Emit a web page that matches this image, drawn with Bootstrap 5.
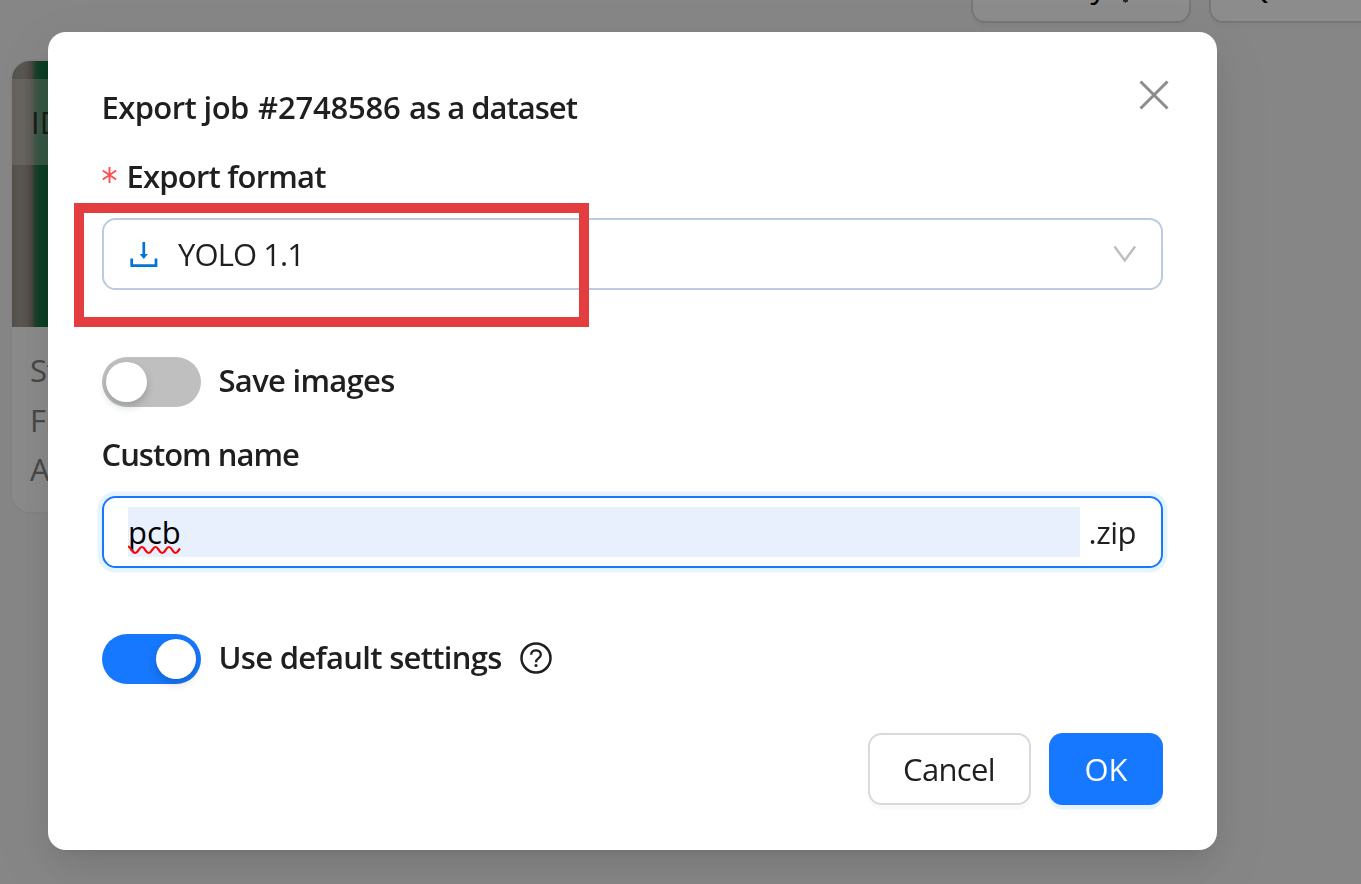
<!DOCTYPE html>
<html lang="en">
<head>
<meta charset="utf-8">
<meta name="viewport" content="width=device-width, initial-scale=1">
<title>Export job as a dataset</title>
<link rel="stylesheet" href="https://cdn.jsdelivr.net/npm/bootstrap@5.3.0/dist/css/bootstrap.min.css">
<style>
  body { font-family: "Open Sans", "Noto Sans", sans-serif; font-size: 31px; line-height: 42px; color: #1f1f1f; background: #f5f5f5; height: 884px; }
  .page { height: 884px; }
  .toolbar { height: 23px; padding-left: 971px; gap: 18px; }
  .tool { height: 72px; width: 220px; flex: none; border: 2px solid #d9d9d9; border-radius: 14px; background: #fff; box-shadow: 0 4px 0 rgba(0,0,0,.02); padding: 12px 0 0 31px; color: #000; white-space: nowrap; }
  .job-card { width: 500px; height: 451px; margin: 38px 0 0 12px; border-radius: 18px; background: #fdfdfd; border: 0; overflow: hidden; box-shadow: 0 0 0 2px rgba(0,0,0,.025); line-height: 49.5px; color: #838383; }
  .preview { height: 266px; flex: none; padding-top: 18px; background: linear-gradient(90deg, #9c8f86 0, #a09e94 6px, #9f9c90 12px, #9b8a80 17px, #7d8274 20px, #3d7650 23px, #1c7442 27px, #10703a 36px); }
  .job-id { height: 86px; background: rgba(225,225,220,.38); padding: 19px; color: #303030; }
  .job-info { padding: 19px 18px; letter-spacing: -.6px; }
  .mask { background: rgba(0,0,0,.45); }
  .export-dialog { width: 1169px; max-width: none; height: 818px; margin: 32px 0 0 48px; }
  .export-dialog .modal-content { height: 818px; border: 0; border-radius: 18px; padding: 54px 54px 45px; color: #1f1f1f;
    box-shadow: 0 13.5px 36px rgba(0,0,0,.08), 0 7px 13.5px -9px rgba(0,0,0,.12), 0 20px 63px 18px rgba(0,0,0,.05); }
  .heading { font-size: 31px; line-height: 42px; font-weight: 600; margin: 0; white-space: nowrap; }
  .t-title { letter-spacing: -.6px; margin: 0 0 27px -.5px; }
  .t-number { letter-spacing: -.2px; margin-left: 2px; }
  .t-rest { letter-spacing: -1px; margin-left: 1px; }
  .t-format { letter-spacing: -.8px; }
  .t-yolo { letter-spacing: -.9px; margin-left: 19px; }
  .t-save { letter-spacing: -.7px; margin-top: -4px; margin-left: -.5px; }
  .t-custom { letter-spacing: -1px; margin-left: -.5px; }
  .t-default { letter-spacing: -.7px; margin-top: -4px; margin-left: -.5px; }
  .t-cancel { letter-spacing: -.65px; margin-right: 1px; }
  .t-zip { letter-spacing: -.5px; margin-left: 9px; }
  .close-x { position: absolute; right: 48px; top: 48px; width: 30px; height: 30px; }
  .required { width: 24.5px; }
  .field { height: 72px; border-radius: 13.5px; border: 2px solid #bccbe0; margin-top: 21px; position: relative; padding: 0 24px 0 25px; }
  .field-active { border-color: #1677ff; box-shadow: 0 0 0 4.5px #e6f4ff; padding: 0 25px 0 24px; }
  .highlight { position: absolute; left: -30px; top: -17px; width: 515px; height: 123.5px; border: 10px solid #e43d40; }
  .filename { background: #e8effd; height: 50px; color: #000; line-height: 51px; position: relative; }
  .squiggle { position: absolute; left: 0; top: 37px; }
  .toggle { width: 99px; height: 50px; border-radius: 25px; background: #bfbfbf; padding: 5px 4px; margin-right: 18px; flex: none; }
  .toggle.on { background: #1677ff; justify-content: flex-end; padding-right: 5px; }
  .knob { width: 40.5px; height: 40px; border-radius: 50%; background: #fff; box-shadow: 0 4.5px 9px rgba(0,35,11,.2); }
  .foot { gap: 18px; margin-top: 49px; }
  .foot .btn { font-size: 31px; line-height: 42px; height: 72px; border-radius: 13.5px; padding: 0; }
  .btn-plain { width: 163px; border: 2px solid #d9d9d9; background: #fff; color: #1f1f1f; box-shadow: 0 4.5px 0 rgba(0,0,0,.02); }
  .btn-ok { width: 114px; border: 0; background: #1677ff; color: #fff; box-shadow: 0 4.5px 0 #e6f3ff; }
</style>
</head>
<body class="overflow-hidden">
<div class="page overflow-hidden">
  <div class="toolbar d-flex align-items-end">
    <div class="tool d-flex align-items-start"><span>Sort by</span><svg width="30" height="38" viewBox="0 0 30 38" fill="none" stroke="#444" stroke-width="2.500" style="margin-left:6px"><path d="M13.500 8v24M8.500 28l5 8 5-8"/><path d="M11 35.500h5"/></svg></div>
    <div class="tool ps-4"><span class="ms-2 ps-1">Quick filters</span></div>
  </div>
  <div class="card job-card">
    <div class="preview"><div class="job-id">ID: 2748586</div></div>
    <div class="job-info"><div>Stage: annotation</div><div>Frames: 1</div><div>Assignee</div></div>
  </div>
</div>

<div class="modal d-block mask overflow-hidden" tabindex="-1" role="dialog">
  <div class="modal-dialog export-dialog">
    <div class="modal-content">
      <svg class="close-x" viewBox="0 0 30 30" fill="none" stroke="#8c8c8c" stroke-width="3"><path d="M1.500 1.500l27 27M28.500 1.500l-27 27"/></svg>
      <h1 class="heading t-title">Export job <span class="t-number">#2748586</span> <span class="t-rest">as a dataset</span></h1>
      <div class="heading d-flex"><span class="required"><svg width="15" height="16" viewBox="0 0 15 16" fill="none" stroke="#ff4d4f" stroke-width="1.900" class="d-block" style="margin-top:12px"><path d="M7.500 0v16M.8 3.500l13.400 9M14.200 3.500l-13.400 9"/></svg></span><span class="t-format">Export format</span></div>
      <div class="field d-flex align-items-center">
        <svg width="30" height="28" viewBox="0 0 30 28" fill="none" stroke="#0074d9" stroke-width="2.700"><path d="M2.700 18.500v7.200h24.300v-7.200M14.800 2v13"/><path d="M10.700 14h8.200l-4.100 5z" fill="#0074d9" stroke="none"/></svg>
        <span class="t-yolo">YOLO 1.1</span>
        <svg class="ms-auto" width="24" height="18" viewBox="0 0 24 18" fill="none" stroke="#bfbfbf" stroke-width="2.500"><path d="M1.500 1.500l10.300 14 10.300-14"/></svg>
        <div class="highlight"></div>
      </div>
      <div class="d-flex align-items-center" style="margin-top:67px">
        <div class="toggle d-flex"><div class="knob"></div></div>
        <span class="heading t-save">Save images</span>
      </div>
      <div class="heading" style="margin-top:26px"><span class="t-custom">Custom name</span></div>
      <div class="field field-active d-flex align-items-center">
        <div class="filename flex-grow-1"><span class="t-pcb">pcb</span>
          <svg class="squiggle" width="53" height="12" viewBox="0 0 53 12" fill="none" stroke="#f00" stroke-width="2.200"><path d="M0 2.500C3 2.500 4 9 7.200 9S11 3 14 3 17.500 9 20.700 9 24.500 3 27.500 3 31 9 34.200 9 38 3 41 3 44.500 9 47.500 9C49.500 9 50.500 6 52 4.500"/></svg>
        </div>
        <span class="t-zip">.zip</span>
      </div>
      <div class="d-flex align-items-center" style="margin-top:66px">
        <div class="toggle on d-flex"><div class="knob"></div></div>
        <span class="heading t-default">Use default settings</span>
        <svg style="margin:-3px 0 0 18px" width="32" height="32" viewBox="0 0 32 32" fill="none" stroke="#1f1f1f" stroke-width="2.500"><circle cx="16" cy="16" r="14.500"/><path d="M11.200 12.800C11.200 6.900 20.800 6.900 20.800 12.800C20.800 16.400 16 16 16 20.300" stroke-width="2.300"/><circle cx="16" cy="23.500" r="1.600" fill="#1f1f1f" stroke="none"/></svg>
      </div>
      <div class="foot d-flex justify-content-end">
        <button type="button" class="btn btn-plain"><span class="t-cancel">Cancel</span></button>
        <button type="button" class="btn btn-ok"><span class="t-ok">OK</span></button>
      </div>
    </div>
  </div>
</div>
<script src="https://cdn.jsdelivr.net/npm/bootstrap@5.3.0/dist/js/bootstrap.bundle.min.js"></script>
</body>
</html>
